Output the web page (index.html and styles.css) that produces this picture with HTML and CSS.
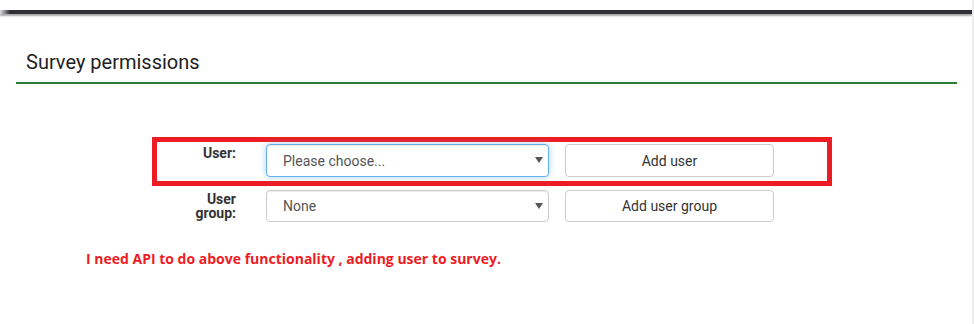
FILE: index.html
```html
<!DOCTYPE html>
<html lang="en">
<head>
  <meta charset="UTF-8">
  <meta name="viewport" content="width=device-width, initial-scale=1">
  <title>Survey permissions</title>
  <link rel="stylesheet" href="styles.css">
</head>
<body>

<div class="page">
  <div class="main">
    <div class="topbar"></div>

    <div class="panel">
      <h3 class="title">Survey permissions</h3>

      <form class="perm-form">
        <div class="form-row highlight">
          <label class="control-label" for="uid">User:</label>
          <div class="select-wrap">
            <select id="uid" class="form-control focus">
              <option>Please choose...</option>
            </select>
            <svg class="caret" width="8" height="6" viewBox="0 0 8 6"><path d="M0 0h8L4 6z" fill="#555"/></svg>
          </div>
          <button type="button" class="btn">Add user</button>
        </div>

        <div class="form-row">
          <label class="control-label" for="ugid">User group:</label>
          <div class="select-wrap">
            <select id="ugid" class="form-control">
              <option>None</option>
            </select>
            <svg class="caret" width="8" height="6" viewBox="0 0 8 6"><path d="M0 0h8L4 6z" fill="#555"/></svg>
          </div>
          <button type="button" class="btn">Add user group</button>
        </div>
      </form>

      <p class="note">I need API to do above functionality , adding user to survey.</p>
    </div>
  </div>
  <div class="scrollbar"></div>
</div>

</body>
</html>
```

FILE: styles.css
```css
body { margin: 0; background: #fff; font-family: Roboto, "Liberation Sans", sans-serif; font-size: 14px; color: #333; }
.page { display: flex; height: 324px; overflow: hidden; }
.main { flex: 1; }
.scrollbar { width: 2px; background: #ededed; }

.topbar { margin-top: 10px; height: 4px; background: linear-gradient(to right, #ddd 0, #2f2f33 10px); box-shadow: 0 2px 2px rgba(0,0,0,0.35); }

.panel { padding: 0 15px 0 16px; }
.title { margin: 38px 0 0; padding: 0 0 10px 10px; font-size: 20px; font-weight: 400; line-height: 20px; color: #222; border-bottom: 2px solid #2b7d36; }

.perm-form { margin: 53px 0 0 136px; width: 680px; }
.form-row { display: flex; align-items: flex-start; padding: 0 5px; }
.form-row + .form-row { margin-top: 4px; }
.form-row.highlight { border: 5px solid #ed1c24; padding: 2px 0 4px; }

.control-label { width: 60px; margin: 0 30px 0 19px; padding-top: 2px; text-align: right; font-weight: 700; line-height: 14px; color: #333; }

.select-wrap { position: relative; width: 283px; margin-right: 16px; }
.form-control { display: block; width: 100%; height: 32px; margin: 0; padding: 0 24px 0 16px; font: inherit; color: #555; background: #fff; border: 1px solid #ccc; border-radius: 4px; box-shadow: inset 0 1px 1px rgba(0,0,0,0.075); -webkit-appearance: none; appearance: none; }
.form-control.focus { height: 33px; border-color: #66afe9; box-shadow: inset 0 1px 1px rgba(0,0,0,0.075), 0 0 6px rgba(102,175,233,0.6); outline: none; }
.caret { position: absolute; right: 6px; top: 13px; }

.btn { width: 209px; height: 32px; padding: 0; font: inherit; color: #333; background: #fff; border: 1px solid #ccc; border-radius: 4px; }
.highlight .btn { height: 33px; }

.note { margin: 29px 0 0 70px; font-family: "Open Sans", sans-serif; font-size: 14px; font-weight: 700; line-height: 16px; color: #ed1c24; }
```
